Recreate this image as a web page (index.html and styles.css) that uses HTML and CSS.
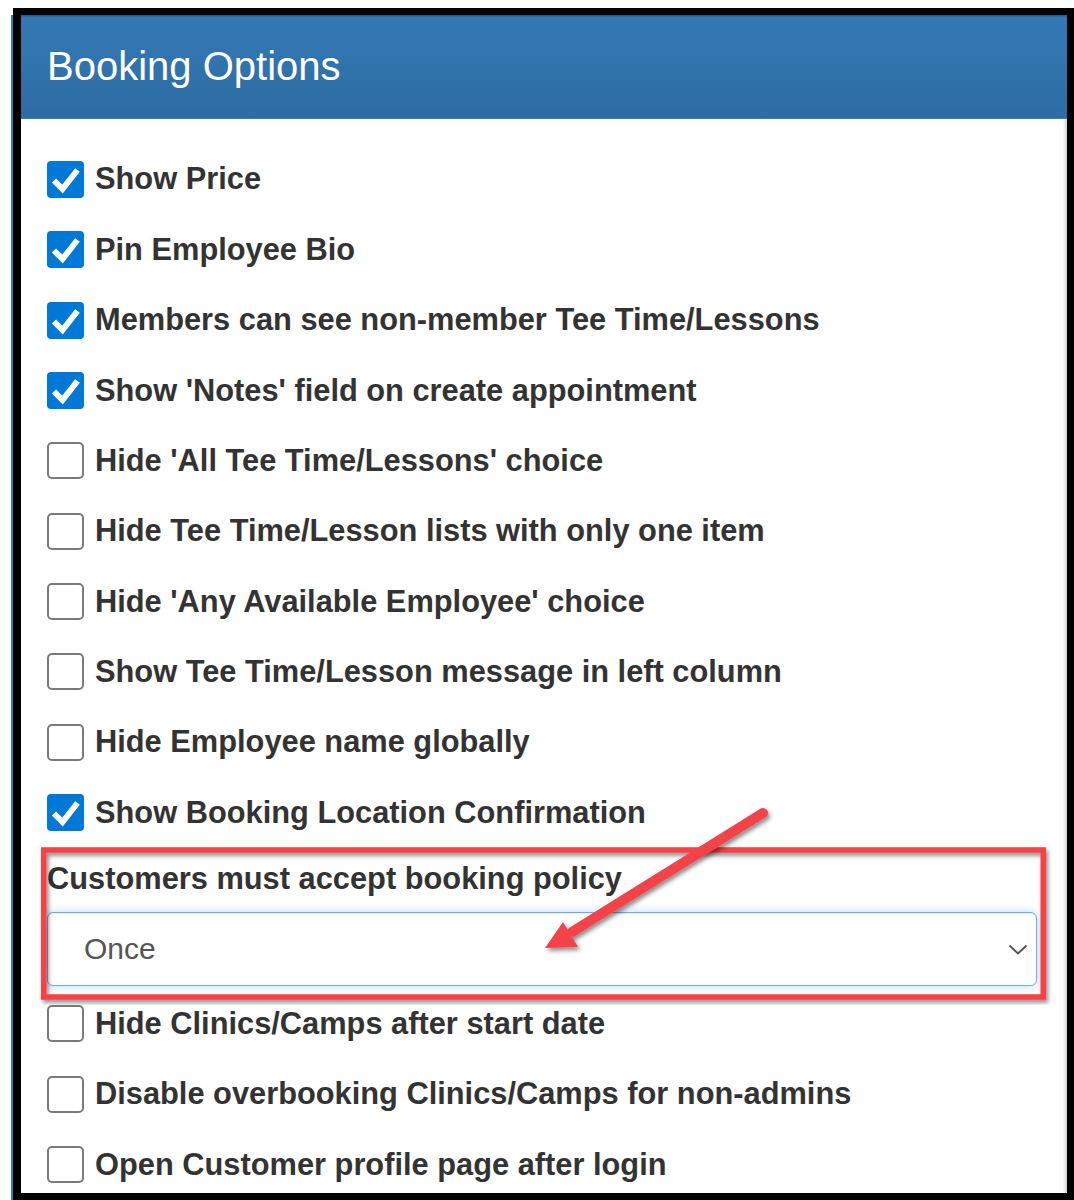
FILE: index.html
```html
<!DOCTYPE html>
<html>
<head>
<meta charset="utf-8">
<link rel="stylesheet" href="styles.css">
</head>
<body>
<div class="frame">
  <div class="panel-heading">Booking Options</div>
  <div class="panel-body">
    <div class="opt"><span class="cb on"><svg viewBox="0 0 37 37"><polyline points="7,19.5 15.5,28 30.5,9"/></svg></span><span class="lbl">Show Price</span></div>
    <div class="opt"><span class="cb on"><svg viewBox="0 0 37 37"><polyline points="7,19.5 15.5,28 30.5,9"/></svg></span><span class="lbl">Pin Employee Bio</span></div>
    <div class="opt"><span class="cb on"><svg viewBox="0 0 37 37"><polyline points="7,19.5 15.5,28 30.5,9"/></svg></span><span class="lbl">Members can see non-member Tee Time/Lessons</span></div>
    <div class="opt"><span class="cb on"><svg viewBox="0 0 37 37"><polyline points="7,19.5 15.5,28 30.5,9"/></svg></span><span class="lbl">Show 'Notes' field on create appointment</span></div>
    <div class="opt"><span class="cb"></span><span class="lbl">Hide 'All Tee Time/Lessons' choice</span></div>
    <div class="opt"><span class="cb"></span><span class="lbl">Hide Tee Time/Lesson lists with only one item</span></div>
    <div class="opt"><span class="cb"></span><span class="lbl">Hide 'Any Available Employee' choice</span></div>
    <div class="opt"><span class="cb"></span><span class="lbl">Show Tee Time/Lesson message in left column</span></div>
    <div class="opt"><span class="cb"></span><span class="lbl">Hide Employee name globally</span></div>
    <div class="opt"><span class="cb on"><svg viewBox="0 0 37 37"><polyline points="7,19.5 15.5,28 30.5,9"/></svg></span><span class="lbl">Show Booking Location Confirmation</span></div>
    <div class="group">
      <div class="group-label">Customers must accept booking policy</div>
      <div class="select-wrap">
        <div class="select">Once</div>
        <svg class="chev" viewBox="0 0 20 12"><polyline points="1.5,1.5 10,9.5 18.5,1.5"/></svg>
      </div>
    </div>
    <div class="opt"><span class="cb"></span><span class="lbl">Hide Clinics/Camps after start date</span></div>
    <div class="opt"><span class="cb"></span><span class="lbl">Disable overbooking Clinics/Camps for non-admins</span></div>
    <div class="opt"><span class="cb"></span><span class="lbl">Open Customer profile page after login</span></div>
  </div>
</div>
<svg class="annot" viewBox="0 0 1074 1200" width="1074" height="1200">
  <defs>
    <filter id="sh" x="-5%" y="-5%" width="110%" height="110%">
      <feDropShadow dx="2" dy="3" stdDeviation="2" flood-color="#000" flood-opacity="0.45"/>
    </filter>
  </defs>
  <g filter="url(#sh)">
    <rect x="43.75" y="850" width="999.5" height="147" fill="none" stroke="#f83f45" stroke-width="5.5"/>
  </g>
  <g filter="url(#sh)">
    <line x1="763" y1="813" x2="572" y2="932" stroke="#f4424a" stroke-width="10" stroke-linecap="round"/>
    <polygon points="545,948 563,922 578,947" fill="#f4424a"/>
  </g>
</svg>
</body>
</html>
```
FILE: styles.css
```css
html, body {
  margin: 0;
  padding: 0;
  background: #fff;
}
body {
  position: relative;
  width: 1074px;
  height: 1200px;
  overflow: hidden;
  font-family: "Liberation Sans", Arial, sans-serif;
}
.frame {
  margin: 8px 0 0 13px;
  width: 1061px;
  height: 1192px;
  box-sizing: border-box;
  border: 7px solid #000;
  border-left-width: 8px;
  box-shadow: -2px 7px 0 #337ab7;
  display: flex;
  flex-direction: column;
  overflow: hidden;
}
.panel-heading {
  flex: none;
  height: 104px;
  border-bottom: 1px solid #3a80bd;
  background: linear-gradient(to bottom, #3379b6 0%, #2e6ca3 100%);
  color: #fff;
  font-size: 40px;
  display: flex;
  align-items: center;
  padding: 0 0 0 26px;
  box-sizing: border-box;
  box-shadow: inset 0 2px 2px -1px rgba(0,0,0,0.35);
}
.panel-body {
  flex: 1;
  padding: 25.3px 30px 0 26px;
  box-shadow: inset -3px 0 3px -1px rgba(0,0,0,0.18);
}
.opt {
  display: flex;
  align-items: center;
  gap: 11px;
  height: 70.35px;
}
.cb {
  flex: none;
  width: 37px;
  height: 37px;
  box-sizing: border-box;
  border: 2px solid #7a7a7a;
  border-radius: 5px;
  background: #fff;
}
.cb.on {
  border: none;
  background: #0078d7;
  border-radius: 4px;
}
.cb svg {
  display: block;
  width: 37px;
  height: 37px;
}
.cb polyline {
  fill: none;
  stroke: #fff;
  stroke-width: 6;
  stroke-linejoin: miter;
  stroke-linecap: butt;
}
.lbl, .group-label {
  font-weight: 700;
  font-size: 30.8px;
  color: #333;
  white-space: nowrap;
}
.group {
  padding-top: 13.7px;
}
.group-label {
  line-height: 36px;
}
.select-wrap {
  position: relative;
  margin-top: 15px;
  margin-bottom: 2.3px;
}
.select {
  height: 74px;
  box-sizing: border-box;
  border: 1px solid #66afe9;
  border-radius: 6px;
  box-shadow: inset 0 1px 1px rgba(0,0,0,0.075), 0 0 10px rgba(102,175,233,0.45);
  padding-left: 36px;
  display: flex;
  align-items: center;
  font-size: 30px;
  color: #555;
  background: #fff;
}
.chev {
  position: absolute;
  right: 9px;
  top: 32px;
  width: 20px;
  height: 12px;
}
.chev polyline {
  fill: none;
  stroke: #555;
  stroke-width: 2;
}
.annot {
  position: absolute;
  left: 0;
  top: 0;
  pointer-events: none;
}
```
